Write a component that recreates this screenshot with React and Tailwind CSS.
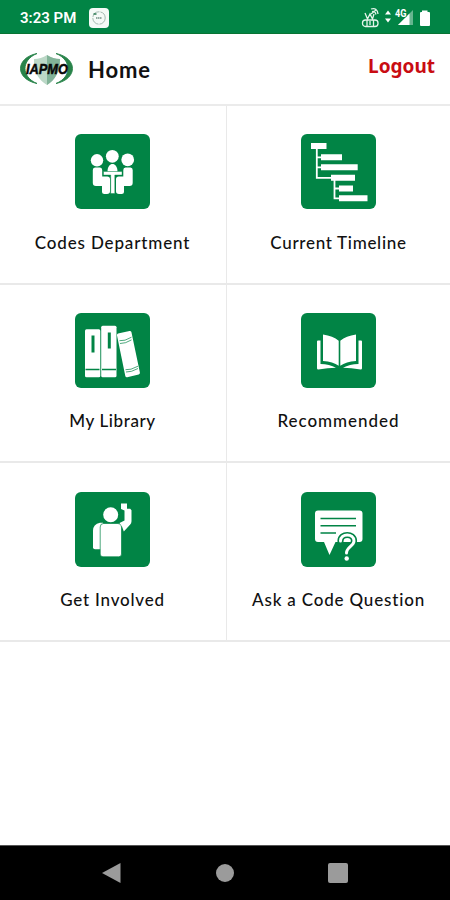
import React from "react";

const DepartmentIcon = () => (
  <svg viewBox="0 0 75 75" className="w-full h-full" fill="#fff">
    <circle cx="22" cy="26.3" r="6.2" />
    <circle cx="37.3" cy="22.3" r="6.4" />
    <circle cx="52.7" cy="25.8" r="6.4" />
    <path d="M32.500 37.500c0-10 10-10 10 0z" />
    <path d="M20 33.500h5q2.200 0 2.200 2.500v6.500h5q2.800 0 2.800 2.800v12q0 2.700-3 2.700h-2.500q-2.500 0-2.500-2.500V52h-6q-3.200 0-3.200-3.200V36q0-2.500 2.200-2.500z" />
    <path d="M55.500 33.500h-5q-2.200 0-2.200 2.500v6.500h-4.500q-2.800 0-2.800 2.800v12q0 2.700 3 2.700h2.500q2.500 0 2.500-2.500V52h5.500q3.200 0 3.200-3.200V36q0-2.500-2.200-2.500z" />
    <path d="M28.500 37.500h18.500v3.500h-7.200v18.500h-4.100V41h-7.200z" stroke="#018445" strokeWidth=".4" />
  </svg>
);

const TimelineIcon = () => (
  <svg viewBox="0 0 75 75" className="w-full h-full" fill="#fff">
    <path d="M10 9h15.500v6H10zM20 20.300h21v5.900H20zM20 30.300h36.700v6H20zM30 40.700h24v6H30zM38 51.500h14v6H38zM38 61.300h28.500v6H38z" />
    <path d="M15.800 14v29.800H31M15.800 23.300h5M15.800 33.300h5M33.500 46v18.300H39M33.500 54.500H39" fill="none" stroke="#fff" strokeWidth="1.800" />
  </svg>
);

const LibraryIcon = () => (
  <svg viewBox="0 0 75 75" className="w-full h-full" fill="#fff">
    <rect x="10" y="16.300" width="15.300" height="48" rx="1.500" />
    <rect x="26.200" y="12.700" width="15.300" height="51.600" rx="1.500" />
    <path d="M43 20.500l11.500-2.600q1.500-.2 1.900 1.200l8.500 40.500q.2 1.500-1.200 2l-11.500 2.600q-1.500.2-1.900-1.200l-8.300-40.600q-.3-1.500 1-1.900z" />
    <g fill="none" stroke="#018445">
      <path d="M18 22.500v17M34.300 19.500v16" strokeWidth="3" />
      <path d="M10.500 56.500h14M27 56.500h14" strokeWidth="1.500" />
      <path d="M44.500 27.700l5.500-.5 6.500-3M45 30.500l5.500-.8 6-2.800M50.500 56.700l5.500-.5 7-3M51 59l5.500-.7 6.500-2.800" strokeWidth=".7" />
    </g>
  </svg>
);

const RecommendedIcon = () => (
  <svg viewBox="0 0 75 75" className="w-full h-full" fill="#fff">
    <path d="M22 21.500q10 1.500 15.700 6.300v25q-5.700-4.300-15.700-4.800z" />
    <path d="M55 21.500q-10 1.500-15.700 6.300v25q5.700-4.300 15.700-4.800z" />
    <path d="M16 28.500q0-1 1-1h2.500v23.500q9 .2 15.500 3.800-8 0-17.700 1.700-1.300 0-1.300-1.200z" />
    <path d="M61 28.500q0-1-1-1h-2.500v23.500q-9 .2-15.500 3.800 8 0 17.700 1.700 1.300 0 1.300-1.200z" />
  </svg>
);

const InvolvedIcon = () => (
  <svg viewBox="0 0 75 75" className="w-full h-full" fill="#fff">
    <circle cx="35.700" cy="22.700" r="7.500" />
    <path d="M28 30.800h-3q-7 1.300-7 8v16.500q0 2 2 2h6z" />
    <path d="M28.500 31.500h14.500q3.500 0 3.500 3.500v27q0 2.800-2.800 2.800H28q-2.800 0-2.800-2.800V35q0-3.500 3.300-3.500z" stroke="#018445" strokeWidth=".7" />
    <path d="M46 11.500h6v5.200h3.200l1.300 1.500v11q0 2-1.500 3.600l-6.200 6.700-1.800-5-2.500-3.500 5-2.500v-10L46 17z" />
  </svg>
);

const QuestionIcon = () => (
  <svg viewBox="0 0 75 75" className="w-full h-full" fill="#fff">
    <path d="M17 18.500h41.500q3 0 3 3V47q0 3-3 3h-24l-6 13-5.500-13h-6q-3 0-3-3V21.500q0-3 3-3z" />
    <path d="M19.500 26.500h35.500M19.500 33.700h35.500M19.500 41h15.500" fill="none" stroke="#018445" strokeWidth="1.600" />
    <g fill="none" strokeLinecap="round">
      <path d="M39.500 49c0-8 13.500-8 13.500 0 0 5-7.500 6-7.500 12" stroke="#018445" strokeWidth="6.200" />
      <path d="M39.500 49c0-8 13.500-8 13.500 0 0 5-7.500 6-7.500 12" stroke="#fff" strokeWidth="3" />
    </g>
    <circle cx="45.700" cy="66.500" r="2.200" />
  </svg>
);

const Logo = () => (
  <svg viewBox="0 0 54 34" className="w-[54px] h-[34px] overflow-visible">
    <path d="M14 7q7 0 13-4 6 4 13 4c0 13-5 21-13 26C19 28 13 20 14 7z" fill="#bcd8c7" />
    <path d="M27 3q6 4 13 4c0 13-5 21-13 26z" fill="#82b398" />
    <path d="M17 1.500C-5 6-5 27 17 31.500 1 25 1 8 17 1.500zM36 1.500C58 6 58 27 36 31.500 52 25 52 8 36 1.500z" fill="#28834a" stroke="#28834a" strokeWidth=".9" />
    <text x="6" y="22" textLength="42" lengthAdjust="spacingAndGlyphs" fill="#080808" stroke="#080808" strokeWidth=".5" className="font-['Liberation_Sans',sans-serif] text-[15px] font-bold italic">IAPMO</text>
  </svg>
);

const StatusBar = () => (
  <div className="flex h-[34px] shrink-0 items-center justify-between border-b border-[#087433] bg-[#018445] pl-5 pr-[19px] text-white">
    <div className="flex items-center gap-[13px] pt-0.5">
      <span className="w-[56px] whitespace-nowrap pt-0.5 font-[Roboto,sans-serif] text-[15px] font-semibold leading-none">3:23 PM</span>
      <div className="flex size-5 items-center justify-center rounded-[4px] bg-[#f5faf7]">
        <svg viewBox="0 0 16 16" className="size-4" fill="none" stroke="#91aaa0">
          <circle cx="8" cy="8" r="6.200" strokeWidth=".8" strokeDasharray="9 1" />
          <path d="M5 8h6" strokeWidth="2" strokeDasharray="1.500 .5" />
          <path d="M2.500 4h3" stroke="#287a50" strokeWidth="1.500" />
        </svg>
      </div>
    </div>
    <svg viewBox="0 0 70 24" className="h-6 w-[70px]" fill="#fff">
      <g fill="none" stroke="#e5f4eb" strokeWidth="1.300">
        <path d="M4 8l2.500 6L9 9l2.500 5L13 9M10 4q6-2 7 5M11 6.500q3-1 4 3M10 9l5-4" />
        <rect x="1.500" y="15" width="15.500" height="6.500" rx="3" />
        <path d="M6 15v6M9 16v4M12.500 15v6" />
      </g>
      <path d="M24 9.500l3-4 3 4zM24 13.500l3 4 3-4z" />
      <path d="M52 5v15H37z" fillOpacity=".4" />
      <path d="M48.500 8.500V20H37z" />
      <text x="34" y="11.500" textLength="11.500" lengthAdjust="spacingAndGlyphs" stroke="#018445" strokeWidth="1.500" paintOrder="stroke" className="font-[Roboto,sans-serif] text-[10px] font-bold">4G</text>
      <path d="M61 5.500h5.500V7h1.500q1 0 1 1v12q0 1-1 1h-8q-1 0-1-1V8q0-1 1-1h1z" />
    </svg>
  </div>
);

const menuItems = [
  { label: "Codes Department", icon: DepartmentIcon, tracking: "tracking-[0.85px]" },
  { label: "Current Timeline", icon: TimelineIcon, tracking: "tracking-[0.7px]" },
  { label: "My Library", icon: LibraryIcon, tracking: "tracking-[0.6px]" },
  { label: "Recommended", icon: RecommendedIcon, tracking: "tracking-[0.95px]" },
  { label: "Get Involved", icon: InvolvedIcon, tracking: "tracking-[0.8px]" },
  { label: "Ask a Code Question", icon: QuestionIcon, tracking: "tracking-[0.82px]" },
];

export default function App() {
  return (
    <div className="flex h-[900px] w-[450px] flex-col overflow-hidden bg-white font-[Lato,sans-serif] text-[#111]">
      <StatusBar />
      <header className="flex h-[72px] shrink-0 items-center justify-between border-b-2 border-[#ebebeb] pl-5 pr-[15px]">
        <div className="flex items-center gap-[14px]">
          <Logo />
          <h1 className="pt-0.5 text-[22px] font-bold leading-none tracking-[0.9px]">Home</h1>
        </div>
        <button className="mb-1.5 font-['Noto_Sans',sans-serif] text-[19px] font-bold leading-none text-[#c90c12]">Logout</button>
      </header>
      <main className="grid grid-cols-[227px_223px]">
        {menuItems.map(({ label, icon: Icon, tracking }, index) => (
          <button
            key={label}
            className={`flex h-[178.600px] flex-col items-center border-b-2 border-[#e9e9e9] pt-[28.400px] ${index % 2 === 0 ? "border-r pr-px" : ""}`}
          >
            <div className="size-[75px] overflow-hidden rounded-[6px] bg-[#018445]">
              <Icon />
            </div>
            <span className={`mt-[21.500px] whitespace-nowrap text-[17px] font-medium leading-6 ${tracking}`}>{label}</span>
          </button>
        ))}
      </main>
      <nav className="mt-auto flex h-[55px] shrink-0 items-center justify-between border-t border-[#555] bg-black pl-[101px] pr-[102px]">
        <svg viewBox="0 0 20 22" className="h-[22px] w-5" fill="#9b9b9b">
          <path d="M1 11L19.500 1v20z" />
        </svg>
        <div className="size-[18px] rounded-full bg-[#9b9b9b]" />
        <div className="size-5 rounded-[2px] bg-[#9b9b9b]" />
      </nav>
    </div>
  );
}
